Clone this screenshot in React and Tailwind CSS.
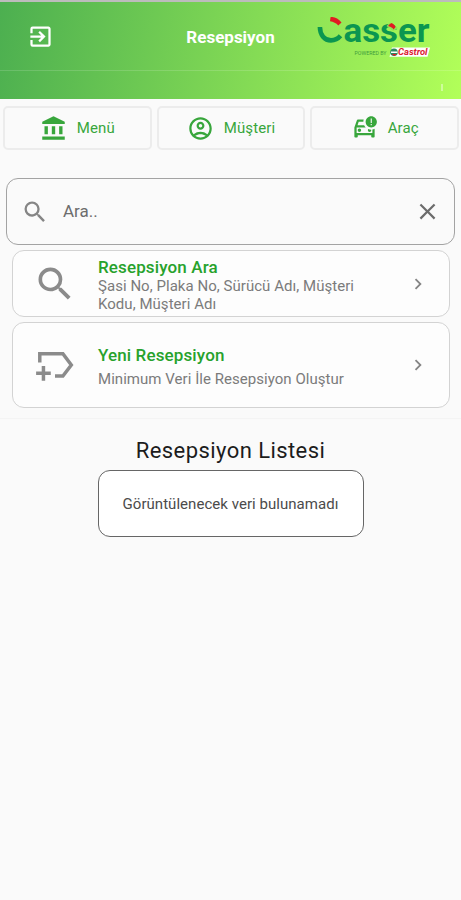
import {
  MdAccountBalance,
  MdChevronRight,
  MdClose,
  MdExitToApp,
  MdOutlineAccountCircle,
  MdOutlineCarCrash,
  MdSearch,
} from 'react-icons/md'

const tabs = [
  { label: 'Menü', Icon: MdAccountBalance },
  { label: 'Müşteri', Icon: MdOutlineAccountCircle },
  { label: 'Araç', Icon: MdOutlineCarCrash },
]

function Logo() {
  return (
    <svg className="w-[120px] h-[46px] overflow-visible" viewBox="0 0 120 46" fontFamily="Roboto, sans-serif">
      <path d="M3.900 13C4 21 8.500 26.400 15 26.400C19 26.400 22 24.800 24.500 21.800" fill="none" stroke="#0b9650" strokeWidth="4.600" />
      <path d="M14.500 3.200C18 2.200 22.500 4.500 25.500 8.500L22.300 11.400C20 9 17.500 7.800 14 7.200Z" fill="#e11b22" />
      <text x="27.500" y="28" fontSize="33" fontWeight="700" textLength="86" lengthAdjust="spacingAndGlyphs" fill="#0b9650">
        asser
      </text>
      {/* Red accent on the second s */}
      <path d="M70.500 12L74 8.500L82 14L77 17Z" fill="#92e353" />
      <path d="M72.500 11L75.500 9C77.500 9.800 79 11.300 79.600 13L77.600 15.400C76.500 13.800 75 12.600 72.500 12.200Z" fill="#e11b22" />
      <text x="38.500" y="40.500" fontSize="6" textLength="32" lengthAdjust="spacingAndGlyphs" fill="#3f9c3d">
        POWERED BY
      </text>
      <path d="M76 33.500H114L111.500 42.800H73.500Z" fill="#fff" />
      <circle cx="78" cy="38.200" r="3.800" fill="#2a8a62" />
      <path d="M75 37.500H81.500V39H75Z" fill="#fff" />
      <path d="M75.500 40H80.800L78.500 42Z" fill="#e11b22" />
      <text x="82" y="41.300" fontSize="8.500" fontWeight="700" fontStyle="italic" textLength="29.500" lengthAdjust="spacingAndGlyphs" fill="#dc2032">
        Castrol
      </text>
    </svg>
  )
}

function NewLabelIcon({ className }) {
  return (
    <svg className={className} viewBox="0 0 24 24" fill="none" stroke="currentColor" strokeWidth="1.900">
      <path d="M3.700 10.600V5.800H16.300L20.900 12L16.300 18H12" />
      <path d="M5.700 12.500V20.600M1.700 16.500H9.700" />
    </svg>
  )
}

function Header() {
  return (
    <header className="h-[99px] border-t-2 border-[#bcbcbc] bg-linear-[100deg,#4caf50,#b2ff59]">
      <div className="relative h-[69px] border-b border-white/15">
        <MdExitToApp className="absolute left-[27px] top-[21px] size-[27px] text-white" />
        <h1 className="pt-[23px] text-center text-[17px] leading-6 font-bold text-white">Resepsiyon</h1>
        <div className="absolute left-[316px] top-[12px]">
          <Logo />
        </div>
      </div>
      <div className="flex justify-end pt-[13px] pr-[18px]">
        <span className="h-[7px] w-[2px] bg-white/40" />
      </div>
    </header>
  )
}

function ActionCard({ icon, title, text, className }) {
  return (
    <div className={`flex items-center rounded-xl border border-[#d3d3d3] bg-[#fdfdfd] pl-[20px] pr-[20px] ${className}`}>
      {icon}
      <div className="ml-[21px] flex-1">
        {title}
        {text}
      </div>
      <MdChevronRight className="size-[22px] text-[#858585]" />
    </div>
  )
}

export default function App() {
  return (
    <div className="h-[900px] w-[461px] overflow-hidden bg-[#fafafa] font-['Roboto',sans-serif]">
      <Header />

      {/* Tabs */}
      <nav className="grid h-[51px] grid-cols-3 gap-[5px] pt-[7px] pl-[3px] pr-[2px]">
        {tabs.map(({ label, Icon }) => (
          <button
            key={label}
            className="flex items-center justify-center gap-[10px] rounded-[5px] border-2 border-[#ececec] text-[15px] tracking-[0.1px] text-[#38a63c]"
          >
            <Icon className="size-[27px]" />
            <span className="pt-px">{label}</span>
          </button>
        ))}
      </nav>

      {/* Search */}
      <div className="mt-7 mx-[6px] flex h-[67px] items-center rounded-xl border border-[#a3a3a3] pl-[14px] pr-[13px]">
        <MdSearch className="size-[28px] text-[#858585]" />
        <span className="ml-[14px] flex-1 text-[17px] text-[#6d6d6d]">Ara..</span>
        <MdClose className="size-[27px] text-[#6c6c6c]" />
      </div>

      <main className="pl-3 pr-[11px] pt-[5px]">
        <ActionCard
          className="h-[67px]"
          icon={<MdSearch className="size-11 text-[#8b8b8b]" />}
          title={<h2 className="mt-[3px] text-[17px] leading-[19px] font-medium tracking-[0.13px] text-[#27a22c]">Resepsiyon Ara</h2>}
          text={
            <p className="text-[15px] leading-[18px] tracking-[0.04px] text-[#7b7b7b]">
              Şasi No, Plaka No, Sürücü Adı, Müşteri
              <br />
              Kodu, Müşteri Adı
            </p>
          }
        />
        <ActionCard
          className="mt-[5px] h-[86px]"
          icon={<NewLabelIcon className="size-11 text-[#8b8b8b]" />}
          title={<h2 className="mt-1 text-[17px] leading-5 font-medium tracking-[0.13px] text-[#27a22c]">Yeni Resepsiyon</h2>}
          text={<p className="mt-1 text-[15px] leading-5 tracking-[0.04px] text-[#7b7b7b]">Minimum Veri İle Resepsiyon Oluştur</p>}
        />
      </main>

      {/* List */}
      <section className="mt-[10px] flex flex-col items-center border-t border-[#f4f4f4] pt-[18px]">
        <h2 className="text-[22px] leading-7 tracking-[0.43px] text-[#1c1c1c]">Resepsiyon Listesi</h2>
        <div className="mt-[5px] flex h-[67px] w-[266px] items-center justify-center rounded-xl border border-[#666] bg-white pt-px text-[15px] tracking-[0.04px] text-[#4b4b4b]">
          Görüntülenecek veri bulunamadı
        </div>
      </section>
    </div>
  )
}
